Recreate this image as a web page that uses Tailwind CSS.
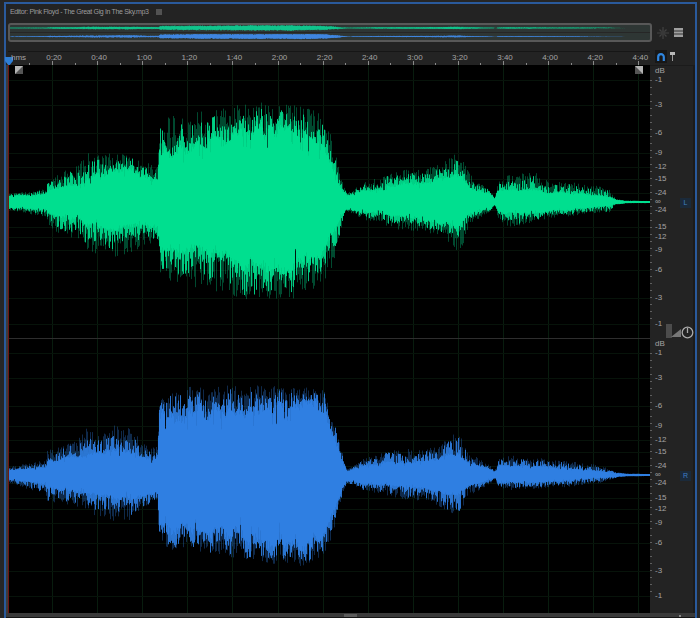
<!DOCTYPE html>
<html lang="en">
<head>
    <meta charset="UTF-8">
    <title>Editor: Pink Floyd - The Great Gig In The Sky.mp3</title>
    <script src="https://cdn.jsdelivr.net/npm/@tailwindcss/browser@4"></script>
</head>
<body class="w-[700px] h-[618px] overflow-hidden bg-[#262626] font-['Liberation_Sans',sans-serif]">
    <div class="h-full pt-[2px] pl-[4px] pr-[3px]">
        <div class="h-full flex flex-col border-t-2 border-x-2 border-[#2a5a9c] bg-[#232323]">
            <!-- Title -->
            <div class="h-[16px] shrink-0 pl-[4px] flex items-center gap-[8px] text-[7px] tracking-[-0.35px] text-[#9c9c9c]">
                <span>Editor: Pink Floyd - The Great Gig In The Sky.mp3</span>
                <svg width="6" height="6" viewBox="0 0 6 6" class="text-[#999]"><path d="M0 1h6M0 3h6M0 5h6" stroke="currentColor" stroke-width=".8"/></svg>
            </div>

            <!-- Overview -->
            <div class="h-[19px] shrink-0 mt-[3px] flex items-center">
                <div class="ml-[2px] w-[644px] h-[19px] rounded-[3px] border-2 border-[#585858] bg-[#2e3634] overflow-hidden">
                    <svg id="overview" width="640" height="15" viewBox="9 23.5 640 15" class="block"></svg>
                </div>
                <svg width="12" height="12" viewBox="0 0 12 12" class="ml-[5px]"><path d="M6 0v12M0 6h12M2.500 2.500l7 7M9.500 2.500l-7 7" stroke="#424242" stroke-width="1.200"/><circle cx="6" cy="6" r="2.400" fill="#383838"/></svg>
                <svg width="9" height="9" viewBox="0 0 9 9" class="ml-[5px]"><path d="M0 0h9v9H0z" fill="#a0a0a0"/><path d="M0 3h9M0 6h9" stroke="#333"/></svg>
            </div>

            <!-- Ruler -->
            <div class="h-[14px] shrink-0 mt-[9px] flex">
                <div id="ruler" class="relative ml-[2px] w-[642px] h-full border-t border-[#161616] text-[8px] leading-[9px] text-[#a4a4a4]">
                    <svg id="ticks" width="642" height="14" viewBox="8 50 642 14" class="absolute left-0 top-0"></svg>
                    <svg width="8" height="9" viewBox="0 0 8 9" class="absolute left-[-3px] top-[5px]"><path d="M0 0h8v4L4 9 0 4z" fill="#2f7fd6"/></svg>
                </div>
                <div class="ml-[5px] -mt-[1px] w-[12px] h-[13px] bg-[#171717] flex items-center justify-center">
                    <svg width="8" height="8" viewBox="0 0 8 8"><path d="M1.200 8V4a2.800 2.800 0 0 1 5.600 0v4" fill="none" stroke="#2f86e0" stroke-width="2.200"/></svg>
                </div>
                <svg width="5" height="9" viewBox="0 0 5 9" class="ml-[3px] mt-[1px]"><path d="M0 0h5v3H0z" fill="#b8b8b8"/><path d="M2.500 3v6" stroke="#999" stroke-width="1"/></svg>
            </div>

            <!-- Waveforms + dB scale -->
            <div class="h-[548px] shrink-0 flex">
                <div class="w-[2px] bg-[#3c3c3c]"></div>
                <div class="relative w-[642px] h-full bg-black">
                    <svg id="wave" width="642" height="548" viewBox="8 64 642 548" class="block"></svg>
                    <svg width="8" height="8" viewBox="0 0 8 8" class="absolute left-[7px] top-[1px]"><path d="M0 0h8v8H0z" fill="#b4b4b4"/><path d="M0 8 8 0v8z" fill="#555"/></svg>
                    <svg width="8" height="8" viewBox="0 0 8 8" class="absolute right-[7px] top-[1px]"><path d="M0 0h8v8H0z" fill="#b4b4b4"/><path d="M0 0 8 8H0z" fill="#555"/></svg>
                </div>
                <div id="scale" class="relative flex-1 h-full border-t border-r-2 border-[#1b1b1b] text-[8px] leading-[9px] text-[#a4a4a4]">
                    <div class="absolute left-[30px] top-[132px] w-[11px] h-[10px] bg-[#1b2a3a] text-[7px] leading-[10px] text-center text-[#3f7fc4]">L</div>
                    <div class="absolute left-[30px] top-[405px] w-[11px] h-[10px] bg-[#1b2a3a] text-[7px] leading-[10px] text-center text-[#3f7fc4]">R</div>
                    <div class="absolute left-[16px] top-[258px] w-[6px] h-[14px] bg-[#4c4c4c]"></div>
                    <svg width="10" height="10" viewBox="0 0 10 10" class="absolute left-[21px] top-[261px]"><path d="M0 10 10 2v8z" fill="#777"/></svg>
                    <svg width="13" height="13" viewBox="0 0 13 13" class="absolute left-[31px] top-[260px]"><circle cx="6.500" cy="6.500" r="5.300" fill="none" stroke="#aaa" stroke-width="1.300"/><path d="M6.500 2v5" stroke="#aaa" stroke-width="1.300"/></svg>
                </div>
            </div>

            <!-- Scrollbar -->
            <div class="flex-1 relative border-b border-[#151515] bg-[#3a3a3a]">
                <div class="absolute left-[338px] top-[1px] w-[13px] h-[3px] bg-[#5c5c5c]"></div>
                <div class="absolute right-[14px] top-[2px] w-[2px] h-[2px] bg-[#8a8a8a]"></div>
            </div>
        </div>
    </div>

    <script>
        // Seeded random so the waveform is the same on every load
        function makeRandom(seed) {
            return () => {
                seed |= 0; seed = seed + 0x6D2B79F5 | 0;
                let t = Math.imul(seed ^ seed >>> 15, 1 | seed);
                t = t + Math.imul(t ^ t >>> 7, 61 | t) ^ t;
                return ((t ^ t >>> 14) >>> 0) / 4294967296;
            };
        }

        // x, peak up, solid up, peak down, solid down (read off the reference)
        const greenEnv = [
            [9,8,6,8,6],[30,11,7,12,7],[46,13,8,15,8],[47,22,12,24,12],[60,30,15,32,15],[75,36,18,38,18],[87,50,24,50,22],[100,48,30,52,27],[115,50,33,56,28],
            [130,46,32,52,27],[145,40,27,44,25],[158,38,24,40,24],
            [159,80,48,70,44],[165,88,51,80,50],[200,92,58,86,52],[250,100,78,98,64],[290,98,76,98,72],[310,94,70,90,59],[325,88,54,78,49],[335,52,31,60,30],[341,24,13,28,14],[347,9,7,10,7],
            [365,20,12,18,11],[380,25,13,22,12],[400,32,18,28,16],[420,34,20,30,18],[440,38,24,35,22],[455,48,30,46,28],[460,54,28,55,26],[470,28,15,22,13],[490,12,8,10,7],[495,4,3,4,3],
            [498,20,12,18,11],[510,28,13,26,12],[535,30,12,20,11],[550,20,10,16,9],[565,20,10,15,9],[590,19,8,12,6],[610,13,5,12,4],[616,3,2,3,2],[625,1.500,1.200,1.500,1.200],[650,1,1,1,1]
        ];
        const blueEnv = [
            [9,8,5,8,5],[30,12,7,15,7],[46,15,9,18,9],[47,25,15,28,14],[60,28,16,28,15],[75,35,18,33,17],[87,47,20,38,20],[100,38,22,42,22],[115,50,28,48,26],[130,48,26,45,24],[145,30,18,32,20],[158,30,18,30,20],
            [159,75,62,70,55],[164,80,66,72,59],[175,88,55,76,56],[200,89,67,78,59],[250,90,70,86,66],[300,88,76,92,73],[312,87,76,88,70],[325,85,67,79,59],[335,52,34,56,36],[343,20,14,18,12],[347,6,4,8,6],
            [365,18,10,16,9],[380,22,12,20,10],[400,26,14,24,13],[420,26,14,26,14],[440,30,18,32,17],[458,46,22,42,20],[470,22,12,22,11],[490,10,6,9,5],[495,4,3,4,3],[498,16,9,14,8],
            [510,20,10,16,8],[530,18,9,14,8],[570,14,7,12,6],[600,10,4,8,3],[616,3,2,3,2],[625,1.500,1.200,1.500,1.200],[650,1,1,1,1]
        ];

        function envAt(env, x) {
            let i = 0;
            while (i < env.length - 2 && env[i + 1][0] < x) i++;
            const a = env[i], b = env[i + 1];
            const t = Math.max(0, Math.min(1, (x - a[0]) / (b[0] - a[0])));
            return a.map((v, k) => v + (b[k] - v) * t);
        }

        // Slow wobble so the edge comes in clumps, not in even fuzz
        function makeNoise(rand, period) {
            const points = Array.from({ length: 700 }, () => rand());
            return x => {
                const p = x / period, i = Math.floor(p), t = p - i;
                return points[i] + (points[i + 1] - points[i]) * t;
            };
        }

        function waveSvg(env, center, color, seed, scale = 1) {
            const rand = makeRandom(seed);
            const wobbleUp = makeNoise(rand, 5), wobbleDown = makeNoise(rand, 5);
            let body = '', near = '', far = '';
            const seg = (x, up, down) => `M${x} ${(center - up * scale).toFixed(1)}V${(center + down * scale).toFixed(1)}`;
            for (let x = 9.5; x < 650; x += 1) {
                const e = envAt(env, x);
                const mu = 0.55 + 0.6 * wobbleUp(x), md = 0.55 + 0.6 * wobbleDown(x);
                const spread = x < 620 ? 1 : 0;
                const bu = e[2] * (0.66 + 0.34 * mu + spread * (rand() < 0.06 ? -0.22 : (rand() - 0.5) * 0.16));
                const bd = e[4] * (0.66 + 0.34 * md + spread * (rand() < 0.06 ? -0.22 : (rand() - 0.5) * 0.16));
                body += seg(x, bu, bd);
                near += seg(x, bu + (e[1] - bu) * mu * Math.pow(rand(), 1.6) * 0.85, bd + (e[3] - bd) * md * Math.pow(rand(), 1.6) * 0.85);
                far += seg(x, bu + (e[1] - bu) * Math.pow(rand(), 0.8), bd + (e[3] - bd) * Math.pow(rand(), 0.8));
            }
            return `<path d="${far}" stroke="${color}" stroke-width=".6" fill="none" opacity=".55"/>`
                + `<path d="${near}" stroke="${color}" stroke-width=".9" fill="none"/>`
                + `<path d="${body}" stroke="${color}" stroke-width="1.100" fill="none"/>`;
        }

        const dbLabels = ['dB','-1','-3','-6','-9','-12','-15','-24','∞','-24','-15','-12','-9','-6','-3','-1'];
        const topY = [70,79,104,132,152,166,178,192,201,209,226,236,249,269,297,323];
        const botY = [343,352,377,405,425,439,451,465,474,482,497,508,522,542,570,595];
        const timeLabels = ['0:20','0:40','1:00','1:20','1:40','2:00','2:20','2:40','3:00','3:20','3:40','4:00','4:20','4:40'];
        const timeX = i => 54 + i * 45.1;

        // Grid lines, then both channels
        let grid = '';
        timeLabels.forEach((_, i) => {
            grid += `<path d="M${Math.round(timeX(i)) - 1.5} 64V612" stroke="#081c0e"/>`;
        });
        [...topY.slice(1), ...botY.slice(1)].forEach(y => {
            grid += `<path d="M9 ${y + 0.5}H650" stroke="#07130a"/>`;
        });
        grid += '<path d="M8.500 64V612" stroke="#6e1410"/>';
        grid += '<path d="M9 337.500H650" stroke="#2e2e2e"/>';
        document.getElementById('wave').innerHTML = grid
            + waveSvg(greenEnv, 201, '#00df8f', 11)
            + waveSvg(blueEnv, 474, '#2f7fe2', 29);

        // Overview strip
        document.getElementById('overview').innerHTML = '<path d="M9 31H650" stroke="#262626"/>'
            + waveSvg(greenEnv, 26.5, '#10c48c', 5, 0.03)
            + waveSvg(blueEnv, 35, '#3f86e0', 6, 0.03);

        // Ruler
        const ruler = document.getElementById('ruler');
        let ticks = '';
        for (let i = -1; i < 28; i++) {
            const x = Math.round(52 + i * 22.55) + 0.5;
            if (x > 650) break;
            const major = i % 2 === 0;
            ticks += `<path d="M${x} ${major ? 59 : 61}V64" stroke="#8a8a8a"/>`;
        }
        document.getElementById('ticks').innerHTML = ticks;
        const addLabel = (parent, text, left, top, center) => {
            const el = document.createElement('span');
            el.textContent = text;
            el.className = center ? 'absolute -translate-x-1/2 whitespace-nowrap' : 'absolute whitespace-nowrap';
            el.style.left = left + 'px';
            el.style.top = top + 'px';
            parent.appendChild(el);
        };
        addLabel(ruler, 'hms', 3, 1);
        timeLabels.forEach((t, i) => addLabel(ruler, t, timeX(i) - 8, 1, true));

        // dB scale
        const scale = document.getElementById('scale');
        [topY, botY].forEach(ys => {
            ys.forEach((y, i) => addLabel(scale, dbLabels[i], 5, y - 64 - 6));
            for (let y = ys[1]; y < ys[15]; y += 7) {
                const tick = document.createElement('div');
                tick.className = 'absolute left-0 w-[2px] h-px bg-[#5e5e5e]';
                tick.style.top = (y - 65) + 'px';
                scale.appendChild(tick);
            }
        });
    </script>
</body>
</html>
